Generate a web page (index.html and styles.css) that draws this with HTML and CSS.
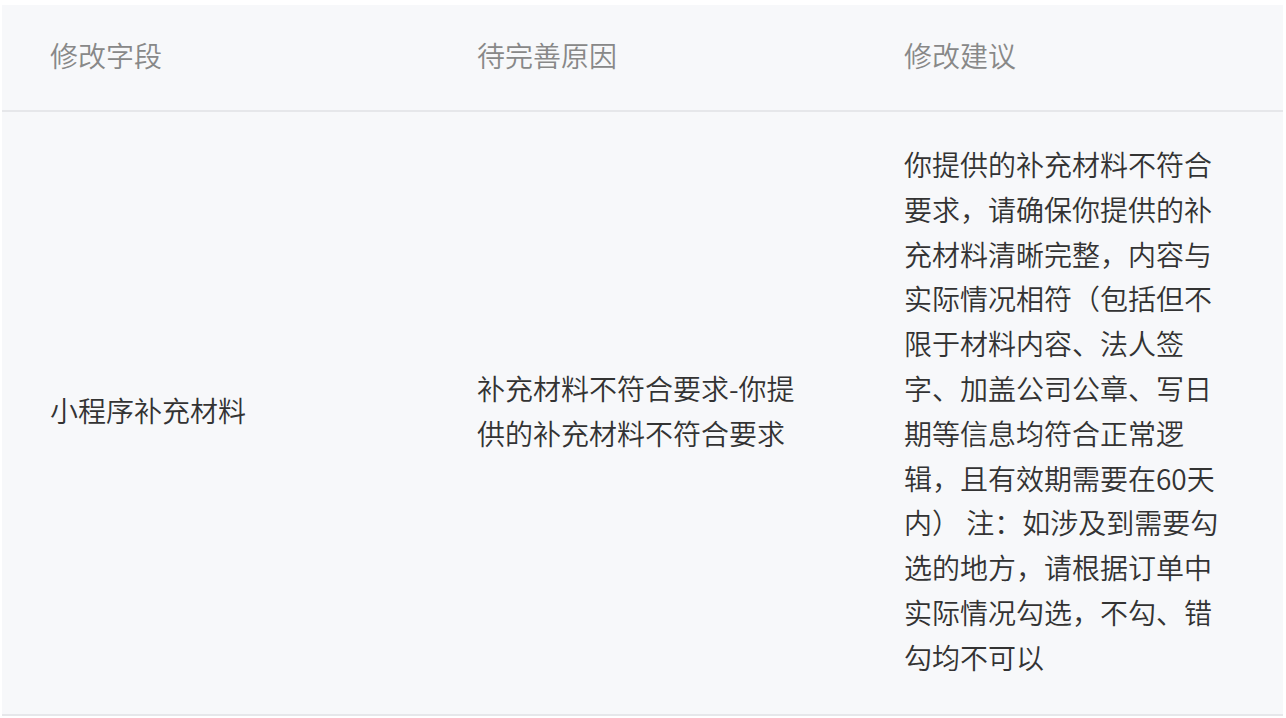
FILE: index.html
```html
<!DOCTYPE html>
<html lang="zh-CN">
<head>
<meta charset="utf-8">
<link rel="stylesheet" href="styles.css">
</head>
<body>
<div class="table">
  <div class="row head">
    <div class="cell">修改字段</div>
    <div class="cell">待完善原因</div>
    <div class="cell">修改建议</div>
  </div>
  <div class="row body">
    <div class="cell">小程序补充材料</div>
    <div class="cell">补充材料不符合要求-你提供的补充材料不符合要求</div>
    <div class="cell">你提供的补充材料不符合要求，请确保你提供的补充材料清晰完整，内容与实际情况相符（包括但不限于材料内容、法人签字、加盖公司公章、写日期等信息均符合正常逻辑，且有效期需要在60天内） 注：如涉及到需要勾选的地方，请根据订单中实际情况勾选，不勾、错勾均不可以</div>
  </div>
</div>
</body>
</html>
```
FILE: styles.css
```css
html, body {
  background: #ffffff;
}
body {
  margin: 5px 3px 0 2px;
  font-family: "Noto Sans CJK SC", "Noto Sans", sans-serif;
}
.table {
  background: #f7f8fa;
}
.row {
  display: grid;
  grid-template-columns: 1fr 1fr 1fr;
  border-bottom: 2px solid #e6e7ea;
}
.cell {
  padding: 0 48px;
  font-size: 28px;
  line-height: 1.6;
  font-weight: 350;
  display: flex;
  align-items: center;
  word-break: break-all;
}
.head .cell {
  height: 105px;
  box-sizing: border-box;
  padding-bottom: 5px;
  color: #888888;
}
.body .cell {
  color: #333333;
  padding-top: 30px;
  padding-bottom: 34px;
}
```
